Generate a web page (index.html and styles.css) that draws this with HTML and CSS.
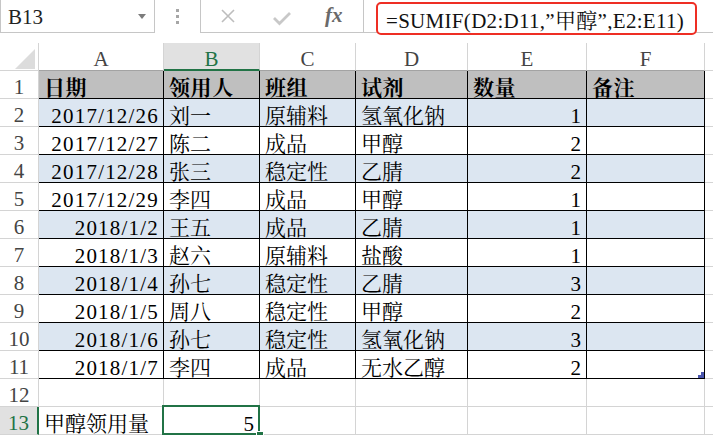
FILE: index.html
```html
<!DOCTYPE html>
<html lang="zh-CN">
<head>
    <meta charset="UTF-8">
    <title>SUMIF</title>
    <link rel="stylesheet" href="styles.css">
</head>
<body>
    <div class="toolbar">
        <div class="name-box">
            <span class="name-text">B13</span>
            <span class="caret"></span>
        </div>
        <div class="grip"><i></i><i></i><i></i></div>
        <div class="fx-area">
            <div class="fx-buttons">
                <svg class="icon-cancel" width="16" height="16" viewBox="0 0 16 16">
                    <path d="M2 2 L14 14 M14 2 L2 14" stroke="#bdbdbd" stroke-width="1.6" fill="none"/>
                </svg>
                <svg class="icon-enter" width="20" height="16" viewBox="0 0 20 16">
                    <path d="M2 8 L7.5 13.5 L18 3" stroke="#c8c8c8" stroke-width="2.8" fill="none"/>
                </svg>
                <span class="fx">fx</span>
            </div>
            <div class="formula">
                <span class="formula-mark">=SUMIF(D2:D11,”甲醇”,E2:E11)</span>
            </div>
        </div>
    </div>

    <div class="sheet">
        <div class="row col-head">
            <div class="cell corner"><span class="corner-tri"></span></div>
            <div class="cell in-table">A</div>
            <div class="cell in-table active">B</div>
            <div class="cell in-table">C</div>
            <div class="cell in-table">D</div>
            <div class="cell in-table">E</div>
            <div class="cell in-table">F</div>
            <div class="cell"></div>
        </div>

        <div class="row title">
            <div class="cell rh">1</div>
            <div class="cell t">日期</div>
            <div class="cell t">领用人</div>
            <div class="cell t">班组</div>
            <div class="cell t">试剂</div>
            <div class="cell t">数量</div>
            <div class="cell t">备注</div>
            <div class="cell"></div>
        </div>
        <div class="row band">
            <div class="cell rh">2</div>
            <div class="cell t num date">2017/12/26</div>
            <div class="cell t">刘一</div>
            <div class="cell t">原辅料</div>
            <div class="cell t">氢氧化钠</div>
            <div class="cell t num">1</div>
            <div class="cell t"></div>
            <div class="cell"></div>
        </div>
        <div class="row">
            <div class="cell rh">3</div>
            <div class="cell t num date">2017/12/27</div>
            <div class="cell t">陈二</div>
            <div class="cell t">成品</div>
            <div class="cell t">甲醇</div>
            <div class="cell t num">2</div>
            <div class="cell t"></div>
            <div class="cell"></div>
        </div>
        <div class="row band">
            <div class="cell rh">4</div>
            <div class="cell t num date">2017/12/28</div>
            <div class="cell t">张三</div>
            <div class="cell t">稳定性</div>
            <div class="cell t">乙腈</div>
            <div class="cell t num">2</div>
            <div class="cell t"></div>
            <div class="cell"></div>
        </div>
        <div class="row">
            <div class="cell rh">5</div>
            <div class="cell t num date">2017/12/29</div>
            <div class="cell t">李四</div>
            <div class="cell t">成品</div>
            <div class="cell t">甲醇</div>
            <div class="cell t num">1</div>
            <div class="cell t"></div>
            <div class="cell"></div>
        </div>
        <div class="row band">
            <div class="cell rh">6</div>
            <div class="cell t num date">2018/1/2</div>
            <div class="cell t">王五</div>
            <div class="cell t">成品</div>
            <div class="cell t">乙腈</div>
            <div class="cell t num">1</div>
            <div class="cell t"></div>
            <div class="cell"></div>
        </div>
        <div class="row">
            <div class="cell rh">7</div>
            <div class="cell t num date">2018/1/3</div>
            <div class="cell t">赵六</div>
            <div class="cell t">原辅料</div>
            <div class="cell t">盐酸</div>
            <div class="cell t num">1</div>
            <div class="cell t"></div>
            <div class="cell"></div>
        </div>
        <div class="row band">
            <div class="cell rh">8</div>
            <div class="cell t num date">2018/1/4</div>
            <div class="cell t">孙七</div>
            <div class="cell t">稳定性</div>
            <div class="cell t">乙腈</div>
            <div class="cell t num">3</div>
            <div class="cell t"></div>
            <div class="cell"></div>
        </div>
        <div class="row">
            <div class="cell rh">9</div>
            <div class="cell t num date">2018/1/5</div>
            <div class="cell t">周八</div>
            <div class="cell t">稳定性</div>
            <div class="cell t">甲醇</div>
            <div class="cell t num">2</div>
            <div class="cell t"></div>
            <div class="cell"></div>
        </div>
        <div class="row band">
            <div class="cell rh">10</div>
            <div class="cell t num date">2018/1/6</div>
            <div class="cell t">孙七</div>
            <div class="cell t">稳定性</div>
            <div class="cell t">氢氧化钠</div>
            <div class="cell t num">3</div>
            <div class="cell t"></div>
            <div class="cell"></div>
        </div>
        <div class="row">
            <div class="cell rh">11</div>
            <div class="cell t num date">2018/1/7</div>
            <div class="cell t">李四</div>
            <div class="cell t">成品</div>
            <div class="cell t">无水乙醇</div>
            <div class="cell t num">2</div>
            <div class="cell t mark-cell"><span class="quick-mark"></span></div>
            <div class="cell"></div>
        </div>

        <div class="row">
            <div class="cell rh">12</div>
            <div class="cell"></div>
            <div class="cell"></div>
            <div class="cell"></div>
            <div class="cell"></div>
            <div class="cell"></div>
            <div class="cell"></div>
            <div class="cell"></div>
        </div>
        <div class="row">
            <div class="cell rh active">13</div>
            <div class="cell">甲醇领用量</div>
            <div class="cell num selected">5<span class="fill-handle"></span></div>
            <div class="cell"></div>
            <div class="cell"></div>
            <div class="cell"></div>
            <div class="cell"></div>
            <div class="cell"></div>
        </div>
    </div>
</body>
</html>
```

FILE: styles.css
```css
body {
    margin: 0;
    background: #fff;
    font-family: "Liberation Serif", "Noto Serif CJK SC", "Noto Sans CJK SC", serif;
    font-size: 21px;
    color: #000;
    overflow: hidden;
}

/* formula bar */
.toolbar {
    display: flex;
    height: 33px;
}
.name-box {
    box-sizing: border-box;
    width: 155px;
    height: 33px;
    border: 1px solid #c6c6c6;
    border-top: none;
    display: flex;
    align-items: center;
    padding-left: 7px;
}
.name-text {
    color: #222;
    line-height: 20px;
    margin-top: 1px;
}
.caret {
    margin-left: auto;
    margin-right: 8px;
    width: 0;
    height: 0;
    border-left: 4px solid transparent;
    border-right: 4px solid transparent;
    border-top: 5px solid #7c7c7c;
}
.grip {
    width: 45px;
    display: flex;
    flex-direction: column;
    align-items: center;
    gap: 3px;
    padding-top: 9px;
    box-sizing: border-box;
}
.grip i {
    display: block;
    width: 3px;
    height: 3px;
    background: #a6a6a6;
}
.fx-area {
    flex: 1;
    display: flex;
    border-left: 1px solid #c6c6c6;
    border-bottom: 1px solid #c6c6c6;
    height: 32px;
}
.fx-buttons {
    width: 163px;
    box-sizing: border-box;
    border-right: 1px solid #c6c6c6;
    display: flex;
    align-items: center;
}
.icon-cancel {
    margin-left: 19px;
    margin-top: -1px;
}
.icon-enter {
    margin-left: 36px;
    margin-top: 4px;
}
.fx {
    margin-left: 33px;
    font-style: italic;
    font-weight: bold;
    font-size: 21px;
    color: #6a6a6a;
    margin-top: -2px;
}
.formula {
    flex: 1;
    padding-left: 12px;
}
.formula-mark {
    display: flex;
    align-items: center;
    box-sizing: border-box;
    width: 321px;
    height: 33px;
    margin-top: 2px;
    padding-left: 8px;
    border: 2px solid #ee2e24;
    border-radius: 5px;
    letter-spacing: 0.3px;
    white-space: nowrap;
    color: #111;
    position: relative;
    background: #fff;
}

/* sheet grid */
.sheet {
    margin-top: 10px;
}
.row {
    display: grid;
    grid-template-columns: 39px 125px 96px 96px 112px 119px 118px 1fr;
    height: 28px;
}
.cell {
    box-sizing: border-box;
    border-right: 1px solid #d4d4d4;
    border-bottom: 1px solid #d4d4d4;
    display: flex;
    align-items: flex-end;
    padding: 0 5px;
    line-height: 20px;
    white-space: nowrap;
    position: relative;
}

.col-head .cell {
    justify-content: center;
    color: #444;
    padding-bottom: 1px;
}
.col-head .in-table {
    border-bottom-color: #a3a3a3;
}
.col-head .active {
    background: #e1e1e1;
    color: #217346;
    border-bottom: 2px solid #217346;
    padding-bottom: 0;
}
.corner {
    align-items: flex-end;
    justify-content: flex-end !important;
    padding: 0 3px 4px 0;
}
.corner-tri {
    display: block;
    width: 20px;
    height: 20px;
    background: #dcdcdc;
    clip-path: polygon(100% 0, 100% 100%, 0 100%);
}

.rh {
    justify-content: center;
    color: #444;
    padding-bottom: 1px;
}
.rh.active {
    background: #e1e1e1;
    color: #217346;
    border-right: 2px solid #217346;
}

.t {
    border-right-color: #000;
    border-bottom-color: #000;
}
.title .t {
    background: #bfbfbf;
    font-weight: bold;
    letter-spacing: 0.6px;
}
.band .t {
    background: #dce6f1;
}
.num {
    justify-content: flex-end;
}
.date {
    letter-spacing: 1.2px;
    padding-right: 4px;
}

.quick-mark {
    position: absolute;
    right: 0;
    bottom: 0;
    width: 6px;
    height: 6px;
    background: #4a55ad;
    clip-path: polygon(100% 0, 100% 100%, 0 100%, 0 50%, 50% 50%, 50% 0);
}

.selected::after {
    content: "";
    position: absolute;
    top: -2px;
    left: -2px;
    right: -1px;
    bottom: -1px;
    border: 2px solid #217346;
}
.fill-handle {
    position: absolute;
    right: -5px;
    bottom: -5px;
    width: 6px;
    height: 6px;
    background: #217346;
    border: 1px solid #fff;
    z-index: 2;
}
```
